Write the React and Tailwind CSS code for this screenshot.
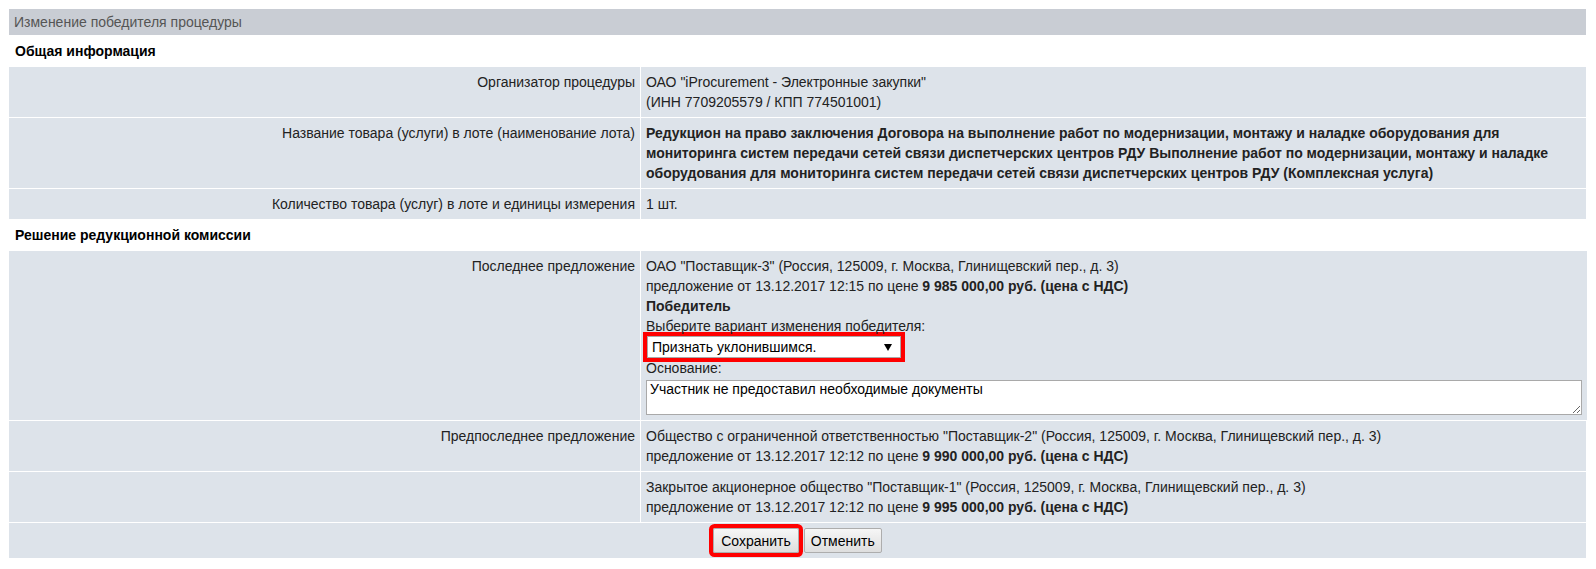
import React from "react";

const Row = ({ label, children }) => {
  return (
    <div className="grid grid-cols-[631px_1fr] gap-px">
      <div className="bg-[#dde3ea] p-[5px] text-right">{label}</div>
      <div className="bg-[#dde3ea] p-[5px]">{children}</div>
    </div>
  );
};

const SectionTitle = ({ children }) => (
  <div className="h-[32px] flex items-center pl-[6px] font-bold text-black">{children}</div>
);

const Offer = ({ who, date, price }) => (
  <>
    <div>{who}</div>
    <div>
      предложение от {date} по цене <b>{price} руб. (цена с НДС)</b>
    </div>
  </>
);

const App = () => {
  return (
    <div className="min-h-screen bg-white pl-[9px] pr-[10px] pt-[9px] font-['Liberation_Sans',Arial,sans-serif] text-[14px] leading-[20px] text-[#222]">
      <div className="h-[26px] bg-[#c9cdd4] pl-[5px] flex items-center text-[#555]">
        Изменение победителя процедуры
      </div>

      <SectionTitle>Общая информация</SectionTitle>
      <div className="flex flex-col gap-px">
        <Row label="Организатор процедуры">
          <div>ОАО "iProcurement - Электронные закупки"</div>
          <div>(ИНН 7709205579 / КПП 774501001)</div>
        </Row>
        <Row label="Название товара (услуги) в лоте (наименование лота)">
          <b>
            Редукцион на право заключения Договора на выполнение работ по модернизации, монтажу и наладке
            оборудования для мониторинга систем передачи сетей связи диспетчерских центров РДУ Выполнение работ по
            модернизации, монтажу и наладке оборудования для мониторинга систем передачи сетей связи диспетчерских
            центров РДУ (Комплексная услуга)
          </b>
        </Row>
        <Row label="Количество товара (услуг) в лоте и единицы измерения">1 шт.</Row>
      </div>

      <SectionTitle>Решение редукционной комиссии</SectionTitle>
      <div className="flex flex-col gap-px">
        <Row label="Последнее предложение">
          <Offer
            who={'ОАО "Поставщик-3" (Россия, 125009, г. Москва, Глинищевский пер., д. 3)'}
            date="13.12.2017 12:15"
            price="9 985 000,00"
          />
          <div className="font-bold">Победитель</div>
          <div>Выберите вариант изменения победителя:</div>
          <div className="ml-px w-[254px] h-[22px] bg-white border border-[#a9a9a9] ring-4 ring-[#f00] flex items-center justify-between pl-[4px] pr-[8px] text-black">
            <span>Признать уклонившимся.</span>
            <svg width="8" height="7" viewBox="0 0 8 7">
              <path d="M0 0h8L4 7z" fill="#000" />
            </svg>
          </div>
          <div>Основание:</div>
          <textarea
            readOnly
            defaultValue="Участник не предоставил необходимые документы"
            className="block mt-[2px] w-[936px] h-[35px] bg-white border border-[#a9a9a9] px-[3px] py-0 text-[14px] leading-[16px] text-black font-['Liberation_Sans',Arial,sans-serif] outline-none"
          />
        </Row>
        <Row label="Предпоследнее предложение">
          <Offer
            who={'Общество с ограниченной ответственностью "Поставщик-2" (Россия, 125009, г. Москва, Глинищевский пер., д. 3)'}
            date="13.12.2017 12:12"
            price="9 990 000,00"
          />
        </Row>
        <Row label="">
          <Offer
            who={'Закрытое акционерное общество "Поставщик-1" (Россия, 125009, г. Москва, Глинищевский пер., д. 3)'}
            date="13.12.2017 12:12"
            price="9 995 000,00"
          />
        </Row>
        <div className="h-[35px] bg-[#dde3ea] flex items-center justify-center gap-[5px]">
          <button className="h-[25px] px-[7px] border border-[#adadad] rounded-[2px] bg-gradient-to-b from-[#f6f6f6] to-[#dedede] text-[14px] text-black ring-4 ring-[#f00]">
            Сохранить
          </button>
          <button className="h-[25px] px-[6px] border border-[#adadad] rounded-[2px] bg-gradient-to-b from-[#f6f6f6] to-[#dedede] text-[14px] text-black">
            Отменить
          </button>
        </div>
      </div>
    </div>
  );
};

export default App;
